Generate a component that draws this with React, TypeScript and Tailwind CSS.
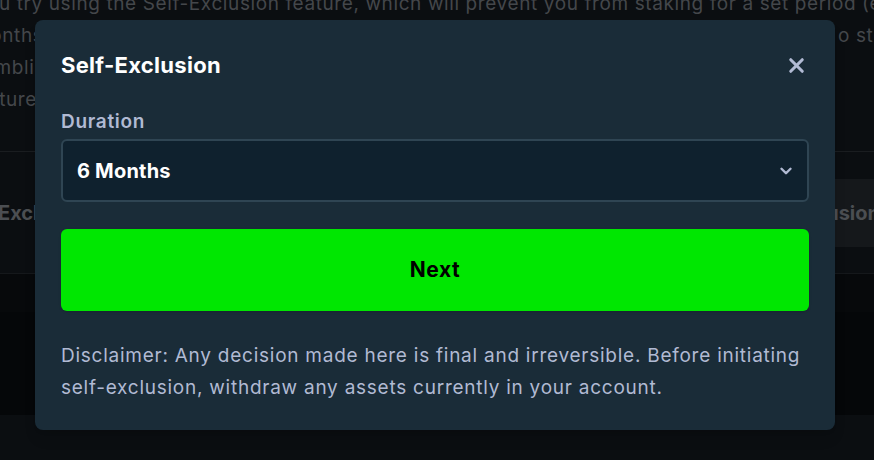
import { X, ChevronDown } from 'lucide-react'

const font = { fontFamily: '"Inter", "Liberation Sans", sans-serif' }

function PageBehind() {
  return (
    <div className="flex flex-col w-full h-full" style={font}>
      <div className="h-[151px] overflow-hidden text-[19px] leading-[32px] tracking-[0.6px] text-[#44474b] whitespace-nowrap">
        <div className="-mt-[12px]">
          <p className="-ml-[24px]">you try using the Self-Exclusion feature, which will prevent you from staking for a set period (e.g.</p>
          <p className="-ml-[27px]">months</p>
          <p className="-ml-[29px]">gambling</p>
          <p className="-ml-[31px]">features</p>
        </div>
      </div>
      <div className="h-[122px] border-t border-[#1a1d20] flex items-center justify-between">
        <span className="-ml-[2px] text-[20px] font-bold text-[#4b4e52]">Exclusion</span>
        <div className="h-[68px] -mr-[30px] bg-[#15181b] rounded flex items-center px-[24px]">
          <span className="text-[20px] font-bold text-[#4b4e52]">Self-Exclusion</span>
        </div>
      </div>
      <div className="h-[39px] border-t border-[#15181b] bg-[#07090b]" />
      <div className="h-[103px] bg-[#050709]" />
      <div className="flex-1 bg-[#0b0e11]" />
    </div>
  )
}

export default function App() {
  return (
    <div className="relative w-[874px] h-[460px] overflow-hidden bg-[#0b0e11]">
      <PageBehind />
      <div className="absolute left-[838px] top-[20px] text-[19px] leading-[32px] tracking-[0.6px] text-[#44474b] whitespace-nowrap" style={font}>
        o stop
      </div>
      <div
        className="absolute left-[35px] top-[20px] w-[800px] rounded-lg bg-[#1a2c38] px-[26px] pt-[31px] pb-[26px] shadow-lg"
        style={font}
      >
        <div className="flex items-center justify-between h-[28px]">
          <h2 className="text-[22px] font-bold text-white leading-[28px] tracking-[0.3px]">Self-Exclusion</h2>
          <X size={23} strokeWidth={3.2} className="text-[#b1bad3] mr-[1px]" />
        </div>
        <label className="block mt-[31px] text-[19px] font-semibold leading-[24px] tracking-[0.7px] text-[#b1bad3]">Duration</label>
        <div className="mt-[5px] h-[63px] rounded-md border-2 border-[#2f4553] bg-[#0f212e] flex items-center justify-between pl-[14px] pr-[12px]">
          <span className="text-[20px] font-bold text-white tracking-[0.2px]">6 Months</span>
          <ChevronDown size={18} strokeWidth={3.2} className="text-[#b1bad3]" />
        </div>
        <button className="mt-[27px] w-full h-[82px] rounded-md bg-[#00e701] text-[21px] font-bold tracking-[0.6px] text-black flex items-center justify-center shadow">
          Next
        </button>
        <p className="mt-[29px] text-[19px] leading-[32px] tracking-[0.75px] text-[#b1bad3] whitespace-nowrap">
          Disclaimer: Any decision made here is final and irreversible. Before initiating
          <br />
          self-exclusion, withdraw any assets currently in your account.
        </p>
      </div>
    </div>
  )
}
